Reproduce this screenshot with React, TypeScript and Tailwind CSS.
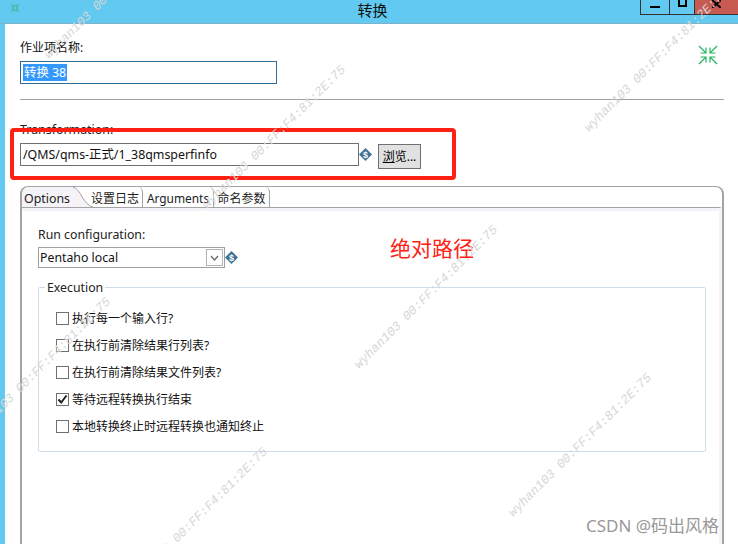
const CJK = "font-['Noto_Sans','Noto_Sans_CJK_SC',sans-serif]"

const WATERMARKS = [
  'left-[42px] top-[52px]',
  'left-[200px] top-[202px]',
  'left-[582px] top-[125px]',
  'left-[352px] top-[362px]',
  'left-[506px] top-[510px]',
  'left-[-35px] top-[434px]',
  'left-[122px] top-[584px]',
]

const OPTIONS = [
  { label: '执行每一个输入行?', checked: false },
  { label: '在执行前清除结果行列表?', checked: false },
  { label: '在执行前清除结果文件列表?', checked: false },
  { label: '等待远程转换执行结束', checked: true },
  { label: '本地转换终止时远程转换也通知终止', checked: false },
]

function ShrinkIcon({ className }: { className: string }) {
  return (
    <svg viewBox="0 0 20 20" className={className} fill="none" stroke="currentColor" strokeWidth="1.2">
      <path d="M1 1 8 8M8 2.5V8H2.5" />
      <path d="M19 1 12 8M12 2.5V8H17.5" />
      <path d="M1 19 8 12M8 17.5V12H2.5" />
      <path d="M19 19 12 12M12 17.5V12H17.5" />
    </svg>
  )
}

function VarIcon() {
  return (
    <svg viewBox="0 0 13 13" className="w-[13px] h-[13px] shrink-0">
      <path d="M6.5 0 13 6.5 6.5 13 0 6.5Z" fill="#3f7296" />
      <text x="6.5" y="9.8" textAnchor="middle" fontSize="9" fontWeight="700" fill="#fff" fontFamily="Liberation Sans">$</text>
    </svg>
  )
}

function Check({ checked }: { checked: boolean }) {
  return (
    <span className="w-[13px] h-[13px] shrink-0 border border-[#707070] bg-white flex items-center justify-center">
      {checked && (
        <svg viewBox="0 0 11 11" className="w-[11px] h-[11px]" fill="none" stroke="#222" strokeWidth="2">
          <path d="M1.5 5.5 4.2 8.5 9.5 1.5" />
        </svg>
      )}
    </span>
  )
}

export default function App() {
  return (
    <div className={`relative w-[738px] h-[544px] overflow-hidden bg-white text-[#111] flex flex-col ${CJK}`}>
      {/* Title bar */}
      <div className="relative h-[24px] shrink-0 bg-[#62caf0] border-b border-[#7fb2cc] flex items-center justify-center">
        <ShrinkIcon className="absolute left-[10px] top-[3px] w-[10px] h-[10px] text-[#2fae6a]" />
        <span className="text-[15px] leading-none pl-[7px] pb-[3px]">转换</span>
        <div className="absolute right-0 top-0 h-[15px] w-[98px] flex border-b border-[#333]">
          <div className="w-[29px] border-l border-[#333] flex items-center justify-center">
            <span className="w-[10px] h-[2px] bg-black" />
          </div>
          <div className="w-[25px] border-l border-[#333] flex justify-center">
            <span className="w-[9px] h-[7px] border-2 border-t-0 border-black" />
          </div>
          <div className="flex-1 bg-[#c75b52] border-l border-[#333] flex justify-start pl-[17px]">
            <svg viewBox="0 0 9 8" className="w-[9px] h-[8px]" fill="none" stroke="#000" strokeWidth="2">
              <path d="M0 0 9 8M9 0 0 8" />
            </svg>
          </div>
        </div>
      </div>

      <div className="flex-1 flex min-h-0">
        <div className="w-[5px] bg-[#62caf0]" />
        <div className="flex-1 flex flex-col pl-[15px] pr-[14px] min-w-0">
          {/* Name */}
          <div className="flex justify-between pt-[16px] pr-[6px]">
            <div>
              <div className="text-[12px] leading-[16px]">作业项名称:</div>
              <div className="mt-[5px] w-[257px] h-[23px] border border-[#2f6d96] flex items-center pl-[2px]">
                <span className="bg-[#3399ff] text-white text-[12.4px] leading-[17px] h-[17px] px-px">转换 38</span>
              </div>
            </div>
            <ShrinkIcon className="mt-[5px] w-[20px] h-[20px] text-[#1fb85f]" />
          </div>

          <div className="mt-[15px] h-px bg-[#a0a0a0]" />

          {/* Transformation */}
          <div className="mt-[22px] text-[12.4px] leading-[16px] text-[#222]">Transformation:</div>
          <div className="mt-[5px] flex items-start">
            <div className="w-[339px] h-[23px] border border-[#707070] flex items-center pl-[2px] pt-[2px] text-[12.4px]">
              /QMS/qms-正式/1_38qmsperfinfo
            </div>
            <div className="mt-[5px] w-[19px] flex justify-start"><VarIcon /></div>
            <button className="mt-[1px] w-[43px] h-[25px] bg-[#e1e1e1] border border-[#707070] text-[12px] text-black">
              <u>浏</u>览...
            </button>
          </div>

          {/* Tab folder */}
          <div className="mt-[17px] flex-1 flex flex-col border-x-2 border-t border-[#a4a4a4] rounded-t-[8px] min-h-0">
            <div className="relative h-[20px] shrink-0 flex text-[12.4px] leading-[23px] text-[#222] whitespace-nowrap">
              <div className="w-[51px] pl-[2px] bg-[#f5f3f7] rounded-tl-[8px]">Options</div>
              <svg viewBox="0 0 20 20" className="w-[20px] h-[20px] shrink-0" preserveAspectRatio="none">
                <path d="M0 0C8 2 10 18 20 20H0Z" fill="#f5f3f7" />
                <path d="M0 0C8 2 10 18 20 20" fill="none" stroke="#a4a4a4" />
              </svg>
              <div className="-ml-[2px] w-[52px] text-[12px] border-r border-[#a4a4a4] rounded-tr-[5px]">设置日志</div>
              <div className="w-[71px] text-[11.9px] text-center border-r border-[#a4a4a4] rounded-tr-[5px]">Arguments</div>
              <div className="w-[56px] text-[12px] text-center border-r border-[#a4a4a4] rounded-tr-[5px]">命名参数</div>
            </div>
            <div className="flex-1 border-t border-[#a4a4a4] border-r-[3px] border-r-[#f5f3f7] relative">
              <div className="h-[3px] bg-[#f5f3f7]" />
              <div className="pl-[16px] pr-[13px]">
                <div className="mt-[16px] text-[12.3px] leading-[16px] text-[#222]">Run configuration:</div>
                <div className="mt-[4px] flex items-center">
                  <div className="w-[187px] h-[21px] border border-[#a0a0a0] flex items-center justify-between pl-[1px] pr-px text-[12.3px]">
                    <span className="pt-[2px]">Pentaho local</span>
                    <span className="w-[17px] h-[17px] border border-[#b4b4b4] flex items-center justify-center">
                      <svg viewBox="0 0 9 6" className="w-[9px] h-[6px]" fill="none" stroke="#666" strokeWidth="1.2">
                        <path d="M1 1 4.5 5 8 1" />
                      </svg>
                    </span>
                  </div>
                  <VarIcon />
                </div>

                {/* Execution group */}
                <div className="relative mt-[19px] h-[165px] border border-[#cfdde8] rounded-[2px] pt-[24px] pl-[17px]">
                  <span className="absolute left-[6px] top-[-8px] bg-white px-[2px] text-[12.3px] leading-[16px] text-[#222]">Execution</span>
                  <div className="flex flex-col gap-[14px]">
                    {OPTIONS.map((o) => (
                      <div key={o.label} className="flex items-center h-[13px] gap-[3px] text-[12px]">
                        <Check checked={o.checked} />
                        <span className="whitespace-nowrap">{o.label}</span>
                      </div>
                    ))}
                  </div>
                </div>
              </div>
            </div>
          </div>
        </div>
      </div>

      {/* Annotations over the screenshot */}
      <div className="absolute left-[10px] top-[128px] w-[446px] h-[52px] border-4 border-[#ff2014] rounded-[4px]" />
      <span className="absolute left-[390px] top-[235px] text-[21px] leading-[26px] text-[#ff2014]">绝对路径</span>
      <span className="absolute left-[586px] top-[516px] text-[17px] leading-[20px] text-[#999999]">CSDN @码出风格</span>

      {WATERMARKS.map((pos) => (
        <span
          key={pos}
          className={`absolute ${pos} origin-top-left -rotate-45 whitespace-nowrap italic text-[12.6px] leading-[14px] text-[#d6d6d6] font-['Liberation_Mono',monospace] pointer-events-none`}
        >
          wyhan103 00:FF:F4:81:2E:75
        </span>
      ))}
    </div>
  )
}
